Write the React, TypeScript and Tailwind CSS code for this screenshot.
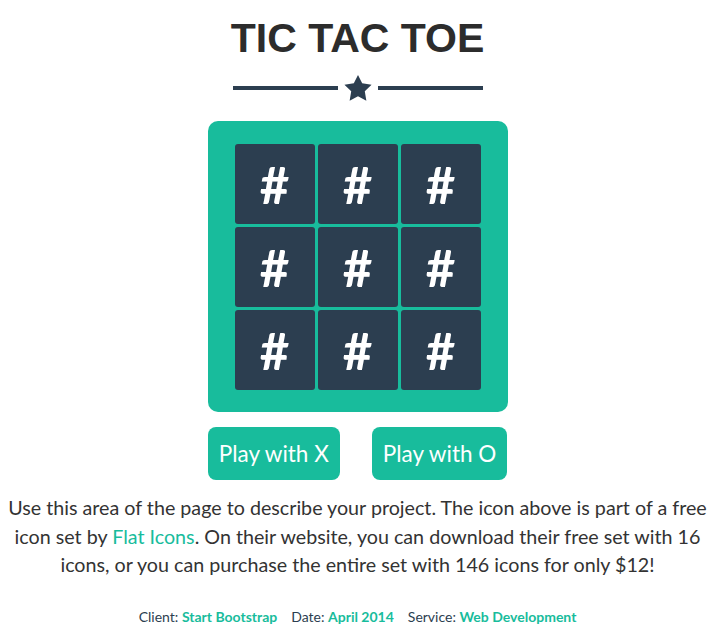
const cells = Array.from({ length: 9 }, (_, i) => i);

export default function App() {
	return (
		<div className="w-[715px] h-[643px] bg-white flex flex-col items-center font-['Lato',sans-serif] text-[#333]">
			<h2 className="mt-[18px] text-[41px] leading-none font-bold uppercase font-['Liberation_Sans',sans-serif] text-[#2c2c2c]">
				Tic Tac Toe
			</h2>
			<div className="mt-[16px] h-[26px] flex items-center gap-[6px]">
				<div className="w-[105px] h-1 bg-[#2c3e50]" />
				<svg viewBox="0 0 24 23" className="w-[28px] h-[26px]">
					<polygon
						fill="#2c3e50"
						points="12,0 15.7,7.4 24,8.6 18,14.45 19.4,22.7 12,18.8 4.6,22.7 6,14.45 0,8.6 8.3,7.4"
					/>
				</svg>
				<div className="w-[105px] h-1 bg-[#2c3e50]" />
			</div>
			<div className="mt-[20px] w-[300px] bg-[#18bc9c] rounded-[10px] px-[27px] pt-[23px] pb-[22px]">
				<div className="grid grid-cols-3 gap-[3px]">
					{cells.map((c) => (
						<div
							key={c}
							className="h-[80px] bg-[#2c3e50] rounded-[3px] flex items-center justify-center text-white text-[51px] font-bold leading-none"
						>
							#
						</div>
					))}
				</div>
			</div>
			<div className="mt-[15px] flex gap-8">
				<button className="h-[53px] px-[11px] rounded-lg bg-[#18bc9c] text-white text-[22.5px]">
					Play with X
				</button>
				<button className="h-[53px] px-[11px] rounded-lg bg-[#18bc9c] text-white text-[22.5px]">
					Play with O
				</button>
			</div>
			<p className="mt-[14px] text-center text-[19.7px] leading-[28.5px]">
				Use this area of the page to describe your project. The icon above is part of a free icon set by{" "}
				<a className="text-[#18bc9c]">Flat Icons</a>. On their website, you can download their free set with 16
				icons, or you can purchase the entire set with 146 icons for only $12!
			</p>
			<div className="mt-[26px] flex gap-[14px] text-[14px] text-[#2c3e50]">
				<span>
					Client: <strong className="text-[#18bc9c]">Start Bootstrap</strong>
				</span>
				<span>
					Date: <strong className="text-[#18bc9c]">April 2014</strong>
				</span>
				<span>
					Service: <strong className="text-[#18bc9c]">Web Development</strong>
				</span>
			</div>
		</div>
	);
}
